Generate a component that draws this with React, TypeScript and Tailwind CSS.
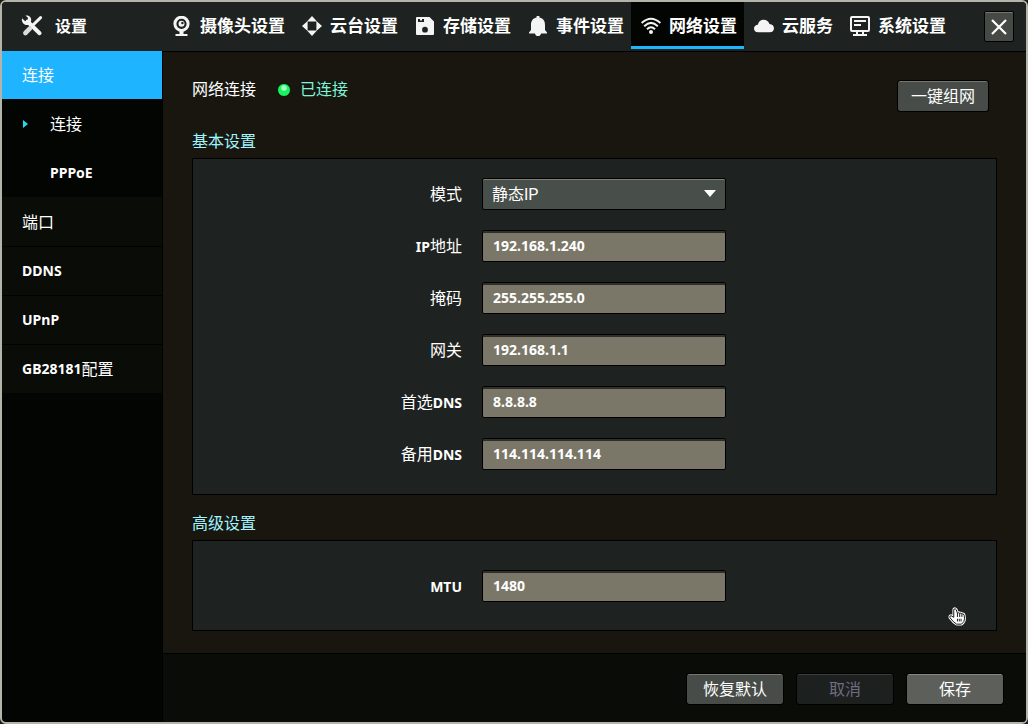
import React, { useState } from 'react';

type IconProps = { className?: string };

const ToolsIcon: React.FC<IconProps> = ({ className }) => (
  <svg viewBox="0 0 22 22" className={className} fill="none">
    <path d="M6.5 6.5 L18.6 18.2" stroke="#f4f4f4" strokeWidth="4" strokeLinecap="round" />
    <path d="M1 3.2 L4.2 6.2 L6.6 5.4 L7 2.8 L4.4 0.6 C8.4 0 11 2.6 10 6.6 L6.8 10 C3 10.4 0.2 7.2 1 3.2 Z" fill="#f4f4f4" />
    <path d="M19.6 2.6 L12 10" stroke="#f4f4f4" strokeWidth="3" strokeLinecap="round" />
    <path d="M9 13.4 L4.4 18" stroke="#dcdcdc" strokeWidth="4.6" strokeLinecap="round" />
  </svg>
);

const CameraIcon: React.FC<IconProps> = ({ className }) => (
  <svg viewBox="0 0 20 20" className={className} fill="none">
    <circle cx="9.5" cy="7.8" r="6.6" stroke="#f4f4f4" strokeWidth="3" />
    <circle cx="9.5" cy="7.8" r="3" fill="#f4f4f4" />
    <circle cx="10.4" cy="7" r="1.2" fill="#1e2220" />
    <path d="M7.5 15 H11.5 V18 H15.5 V20 H3.5 V18 H7.5 Z" fill="#f4f4f4" />
  </svg>
);

const PtzIcon: React.FC<IconProps> = ({ className }) => (
  <svg viewBox="0 0 20 20" className={className} fill="#f4f4f4">
    <path d="M10 0 L15 5.6 H5 Z M10 20 L5 14.4 H15 Z M0 10 L5.6 5 V15 Z M20 10 L14.4 15 V5 Z" />
  </svg>
);

const StorageIcon: React.FC<IconProps> = ({ className }) => (
  <svg viewBox="0 0 20 20" className={className}>
    <path fillRule="evenodd" fill="#f4f4f4" d="M2 1 H14.5 L19 5.5 V18 Q19 19 18 19 H2 Q1 19 1 18 V2 Q1 1 2 1 Z M3 3 V6 H9 V3 H7 V4.4 H5 V3 Z M10 10.8 A2.9 2.9 0 1 0 10 16.6 A2.9 2.9 0 1 0 10 10.8 Z" />
  </svg>
);

const BellIcon: React.FC<IconProps> = ({ className }) => (
  <svg viewBox="0 0 20 20" className={className} fill="#f4f4f4">
    <path d="M8.6 0 H11.4 V1.6 C15.6 2.4 17 5.4 17 9 V14 L19 16.4 V17.4 H13 C12.6 19.2 11.6 20 10 20 C8.4 20 7.4 19.2 7 17.4 H1 V16.4 L3 14 V9 C3 5.4 4.4 2.4 8.6 1.6 Z" />
  </svg>
);

const WifiIcon: React.FC<IconProps> = ({ className }) => (
  <svg viewBox="0 0 20 20" className={className} fill="none" stroke="#f4f4f4" strokeWidth="2">
    <path d="M0.6 7 Q10 -1.6 19.4 7" />
    <path d="M3.2 10.2 Q10 3.6 16.8 10.2" />
    <path d="M6 13.2 Q10 9.4 14 13.2" />
    <circle cx="10" cy="16" r="2" fill="#f4f4f4" stroke="none" />
  </svg>
);

const CloudIcon: React.FC<IconProps> = ({ className }) => (
  <svg viewBox="0 0 22 20" className={className} fill="#f4f4f4">
    <path d="M4.6 17 C1.6 17 0 15.2 0 12.8 C0 10.4 1.8 8.8 4.2 8.6 C4.8 5 7.4 3 10.6 3 C13.8 3 16.2 4.8 17 7.8 C20.2 8 22 10 22 12.6 C22 15.2 20.2 17 17.4 17 Z" />
  </svg>
);

const SystemIcon: React.FC<IconProps> = ({ className }) => (
  <svg viewBox="0 0 20 20" className={className} fill="none" stroke="#f4f4f4" strokeWidth="2">
    <rect x="1" y="1" width="18" height="14" rx="1" />
    <path d="M4 5 H16 M4 9 H11" />
    <path d="M7 15 V18 M13 15 V18" />
    <path d="M3 19 H17" />
  </svg>
);

const tabs = [
  { label: '摄像头设置', Icon: CameraIcon },
  { label: '云台设置', Icon: PtzIcon },
  { label: '存储设置', Icon: StorageIcon },
  { label: '事件设置', Icon: BellIcon },
  { label: '网络设置', Icon: WifiIcon },
  { label: '云服务', Icon: CloudIcon },
  { label: '系统设置', Icon: SystemIcon },
];

// latin is set smaller and bolder than the chinese part
const fields = [
  { id: 'ip', latin: 'IP', text: '地址', latinFirst: true, value: '192.168.1.240' },
  { id: 'mask', latin: '', text: '掩码', latinFirst: false, value: '255.255.255.0' },
  { id: 'gateway', latin: '', text: '网关', latinFirst: false, value: '192.168.1.1' },
  { id: 'dns1', latin: 'DNS', text: '首选', latinFirst: false, value: '8.8.8.8' },
  { id: 'dns2', latin: 'DNS', text: '备用', latinFirst: false, value: '114.114.114.114' },
];

const Latin: React.FC<{ children: React.ReactNode }> = ({ children }) => (
  <span className="text-sm leading-4 font-bold">{children}</span>
);

interface FieldProps {
  id: string;
  label: React.ReactNode;
  children: React.ReactNode;
}

const Field: React.FC<FieldProps> = ({ id, label, children }) => (
  <div className="flex items-center gap-5">
    <label htmlFor={id} className="w-[269px] shrink-0 text-right">{label}</label>
    {children}
  </div>
);

const TextInput: React.FC<{ id: string; initial: string }> = ({ id, initial }) => {
  const [value, setValue] = useState(initial);
  return (
    <input
      id={id}
      type="text"
      value={value}
      onChange={(e) => setValue(e.target.value)}
      className="h-8 w-[244px] rounded-xs border border-black bg-[#7b7768] px-2.5 pb-0.5 text-sm font-bold shadow-[inset_0_2px_0_#302e29] outline-none"
    />
  );
};

const buttonBase = 'h-[30px] rounded-xs pb-0.5 text-base leading-4 outline outline-black border-t';

export default function App() {
  const [tab, setTab] = useState('网络设置');
  const [mode, setMode] = useState('static');

  return (
    <div className="min-h-screen bg-[#1a1a16] flex font-['Noto_Sans','Noto_Sans_CJK_SC',sans-serif] text-base leading-4 text-white">
      <div className="flex-1 flex flex-col rounded-md border-2 border-[#b4b4aa] bg-[#030502] overflow-hidden">
        {/* Header */}
        <header className="h-[49px] flex items-center bg-[#1e2220] pr-3">
          <div className="w-40 shrink-0 flex items-center gap-3 pl-[19px] pb-0.5">
            <ToolsIcon className="w-[22px] h-[22px]" />
            <h1 className="font-bold">设置</h1>
          </div>
          <nav className="flex-1 flex self-stretch">
            {tabs.map(({ label, Icon }) => (
              <button
                key={label}
                onClick={() => setTab(label)}
                className={`h-[47px] flex items-center gap-2 pl-2.5 pr-[7px] text-[17px] leading-5 font-bold whitespace-nowrap border-b-3 pt-[3px]
                  ${tab === label ? 'bg-[#030502] border-[#1eb4ff]' : 'border-transparent'}`}
              >
                <Icon className="w-5 h-5 shrink-0" />
                {label}
              </button>
            ))}
          </nav>
          <button aria-label="关闭" className="w-[30px] h-[31px] flex items-center justify-center rounded-xs border border-black bg-[#464a46] shadow-[inset_0_1px_0_#77776c]">
            <svg viewBox="0 0 16 16" className="w-4 h-4" stroke="#fff" strokeWidth="2.2">
              <path d="M1 1 L15 15 M15 1 L1 15" />
            </svg>
          </button>
        </header>

        <div className="flex-1 flex">
          {/* Side menu */}
          <aside className="w-[161px] shrink-0 border-r border-black">
            <a href="#connection" className="h-12 flex items-center pl-5 bg-[#1eb4ff]">连接</a>
            <a href="#connect" className="h-[49px] flex items-center pl-[21px]">
              <svg viewBox="0 0 5 8" className="w-[5px] h-2 mr-[22px]" fill="#1fdcf0">
                <path d="M0 0 L5 4 L0 8 Z" />
              </svg>
              连接
            </a>
            <a href="#pppoe" className="h-[49px] flex items-center pl-12"><Latin>PPPoE</Latin></a>
            <div className="bg-[#0a0c08]">
              <a href="#port" className="h-[49px] flex items-center pl-5">端口</a>
              <a href="#ddns" className="h-[49px] flex items-center pl-5 border-t border-[#020301]"><Latin>DDNS</Latin></a>
              <a href="#upnp" className="h-[49px] flex items-center pl-5 border-t border-[#020301]"><Latin>UPnP</Latin></a>
              <a href="#gb28181" className="h-[49px] flex items-center pl-5 border-t border-[#020301]"><Latin>GB28181</Latin>配置</a>
            </div>
          </aside>

          <div className="flex-1 flex flex-col border-t border-black bg-[#18160f]">
            <main className="flex-1 px-[29px] pt-[29px] pb-[22px]">
              <div className="h-[30px] flex items-start pr-[9px]">
                <span>网络连接</span>
                <svg viewBox="0 0 14 14" className="w-3.5 h-3.5 ml-[21px] mt-0.5">
                  <circle cx="7" cy="7" r="6.5" fill="#1cf25e" stroke="#04140a" />
                  <circle cx="7" cy="5" r="2.8" fill="#a0ffc8" />
                </svg>
                <span className="ml-[9px] text-[#7df5d8]">已连接</span>
                <button className={`${buttonBase} ml-auto w-[90px] bg-[#474c48] border-[#77776c]`}>一键组网</button>
              </div>

              <h2 className="mt-[18px] leading-6 text-[#a0f4ff]">基本设置</h2>
              <section className="mt-[5px] flex flex-col gap-5 border border-black bg-[#1e2220] pt-[19px] pb-6">
                <Field id="mode" label="模式">
                  <div className="relative w-[244px]">
                    <select
                      id="mode"
                      value={mode}
                      onChange={(e) => setMode(e.target.value)}
                      className="h-8 w-full appearance-none rounded-xs border border-black bg-[#484e49] pt-0.5 pl-[9px] pr-8 text-base leading-5 font-['Roboto','Noto_Sans_CJK_SC',sans-serif] shadow-[inset_0_1px_0_#7f7f73] outline-none"
                    >
                      <option value="static">静态IP</option>
                      <option value="dhcp">DHCP</option>
                    </select>
                    <svg viewBox="0 0 12 7" className="absolute right-2.5 top-3 w-3 h-[7px] pointer-events-none" fill="#fff">
                      <path d="M0 0 H12 L6 7 Z" />
                    </svg>
                  </div>
                </Field>
                {fields.map((f) => (
                  <Field
                    key={f.id}
                    id={f.id}
                    label={f.latinFirst ? <><Latin>{f.latin}</Latin>{f.text}</> : <>{f.text}<Latin>{f.latin}</Latin></>}
                  >
                    <TextInput id={f.id} initial={f.value} />
                  </Field>
                ))}
              </section>

              <h2 className="mt-4 leading-6 text-[#a0f4ff]">高级设置</h2>
              <section className="relative mt-[5px] border border-black bg-[#1e2220] pt-[29px] pb-7">
                <Field id="mtu" label={<Latin>MTU</Latin>}>
                  <TextInput id="mtu" initial="1480" />
                </Field>
                {/* Hand pointer */}
                <svg viewBox="-1 -1 20 21" className="absolute right-[30px] bottom-1 w-[18px] h-[19px] pointer-events-none">
                  <g fill="#fff" strokeLinejoin="round">
                    <path
                      d="M5.5 1.5 Q7 0 8.2 2 L9.5 6 Q11 4.6 12 6 Q13.6 5 14.4 6.6 Q16.4 6 17 8.2 L17.4 12 Q17.4 15.6 14 18 H8.6 Q5 16 1.2 10.8 Q0.4 8.8 2.4 8.6 L5.4 10.4 V2.5 Z"
                      stroke="#fff"
                      strokeWidth="3"
                    />
                    <path
                      d="M5.5 1.5 Q7 0 8.2 2 L9.5 6 Q11 4.6 12 6 Q13.6 5 14.4 6.6 Q16.4 6 17 8.2 L17.4 12 Q17.4 15.6 14 18 H8.6 Q5 16 1.2 10.8 Q0.4 8.8 2.4 8.6 L5.4 10.4 V2.5 Z"
                      stroke="#000"
                    />
                  </g>
                  <path d="M9.5 6 V10 M12 6 V10 M14.4 7 V10 M9.5 12 V15 M11.5 12 V15 M13.5 12 V15" stroke="#000" fill="none" />
                </svg>
              </section>
            </main>

            <footer className="flex justify-end gap-3.5 border-t border-black bg-[#0a0c08] pt-5 pb-[18px] pr-[23px]">
              <button className={`${buttonBase} w-24 bg-[#474c48] border-[#77776c]`}>恢复默认</button>
              <button disabled className={`${buttonBase} w-24 bg-[#1c201e] border-[#3a3e3a] text-[#6e6e82]`}>取消</button>
              <button className={`${buttonBase} w-24 bg-[#5c5f5a] border-[#88887c]`}>保存</button>
            </footer>
          </div>
        </div>
      </div>
    </div>
  );
}
